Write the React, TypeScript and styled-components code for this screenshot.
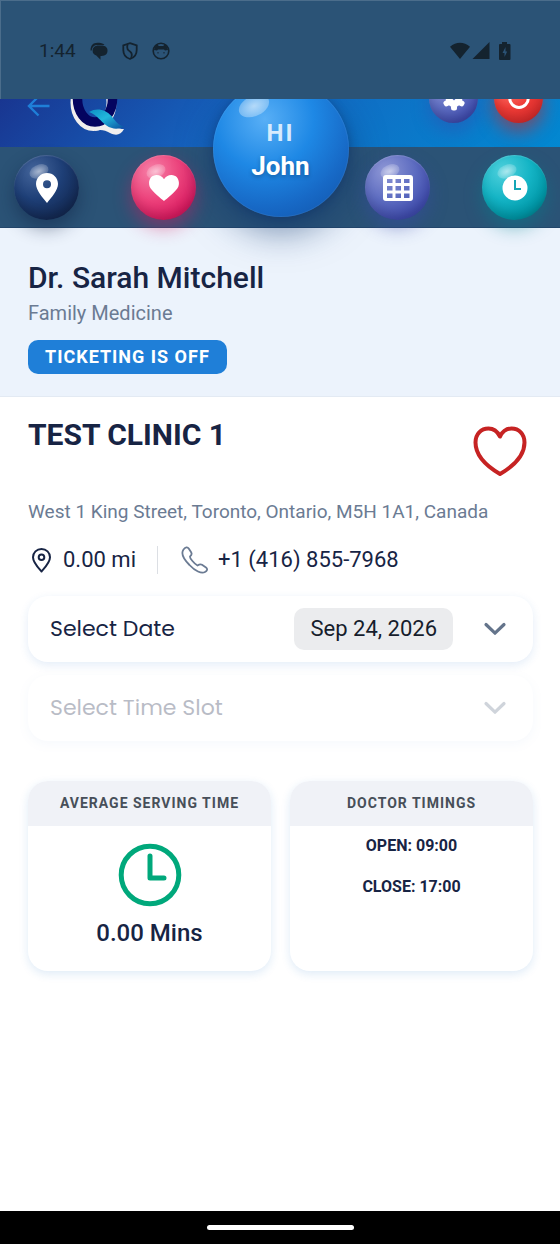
import React from 'react';
import styled, { createGlobalStyle } from 'styled-components';

const Global = createGlobalStyle`
  *, *::before, *::after { box-sizing: border-box; }
  body { margin: 0; background: #fff; font-family: Roboto, "Liberation Sans", sans-serif; color: #172444; }
  h1, h2, h3, p { margin: 0; }
  button { font: inherit; color: inherit; border: 0; padding: 0; background: none; cursor: pointer; }
  a { color: inherit; text-decoration: none; }
`;

const Page = styled.div`
  position: relative;
  display: flex;
  flex-direction: column;
  min-height: 100vh;
`;

const StatusBar = styled.div`
  position: absolute;
  inset: 0 0 auto;
  z-index: 4;
  display: flex;
  align-items: center;
  justify-content: space-between;
  height: 99px;
  padding: 2px 48px 0 39px;
  background: #2b5376;
  box-shadow: inset 1px 1px 0 #4b6d8b;
  color: #14232f;
  font-size: 19px;
  line-height: 24px;
`;

const StatusGroup = styled.div<{ $gap: number }>`
  display: flex;
  align-items: center;
  gap: ${(p) => p.$gap}px;
  svg { display: block; }
`;

const Header = styled.header`
  display: flex;
  align-items: flex-end;
  padding: 74px 17px 24px 26px;
  background: linear-gradient(135deg, #1a237e 0%, #1565c0 50%, #0288d1 100%);
`;

const BackButton = styled.button`
  display: flex;
  margin-bottom: 5px;
  color: #1f7fd8;
`;

const Logo = styled.a`
  display: flex;
  margin: 0 auto -12px 20px;
`;

const HeaderActions = styled.div`
  display: flex;
  gap: 16px;
`;

const tones = {
  navy: { fill: 'radial-gradient(circle at 32% 25%, #44659b 0%, #1e3f77 42%, #142b56 72%, #0e1d3d 100%)', glow: 'rgba(13, 30, 66, 0.45)' },
  pink: { fill: 'radial-gradient(circle at 32% 25%, #f67fa6 0%, #ec407a 45%, #d81b60 75%, #ad1457 100%)', glow: 'rgba(216, 27, 96, 0.45)' },
  indigo: { fill: 'radial-gradient(circle at 32% 25%, #8f98d6 0%, #5c6bc0 45%, #3f4bac 75%, #303f9f 100%)', glow: 'rgba(57, 73, 171, 0.45)' },
  teal: { fill: 'radial-gradient(circle at 32% 25%, #4ed0dc 0%, #14b4c5 42%, #0097a7 72%, #006a75 100%)', glow: 'rgba(0, 131, 143, 0.45)' },
  red: { fill: 'radial-gradient(circle at 32% 25%, #ff7b72 0%, #ee3b36 45%, #d82c2c 75%, #b01c1c 100%)', glow: 'rgba(198, 40, 40, 0.6)' },
};

const Orb = styled.button<{ $tone: keyof typeof tones; $small?: boolean }>`
  position: relative;
  display: flex;
  align-items: center;
  justify-content: center;
  flex: none;
  width: ${(p) => (p.$small ? 49 : 65)}px;
  height: ${(p) => (p.$small ? 49 : 65)}px;
  border-radius: 50%;
  color: #fff;
  background: ${(p) => tones[p.$tone].fill};
  box-shadow: 0 8px 18px ${(p) => tones[p.$tone].glow}, inset 0 -6px 10px rgba(0, 0, 0, 0.12), inset 0 1px 1px rgba(255, 255, 255, 0.15);

  &::before {
    content: '';
    position: absolute;
    top: 16%;
    left: 23%;
    width: 30%;
    height: 20%;
    border-radius: 50%;
    transform: rotate(-25deg);
    background: radial-gradient(closest-side, rgba(255, 255, 255, 0.55), rgba(255, 255, 255, 0.18));
  }

  svg { position: relative; display: block; }
`;

const NavBar = styled.nav`
  position: relative;
  z-index: 2;
  display: flex;
  justify-content: space-between;
  padding: 8px 13px 7px 14px;
  background: #2b5376;
  border-bottom: 1px solid #23466b;
`;

const CenterSlot = styled.div`
  position: relative;
  width: 65px;
  height: 65px;
`;

const ProfileOrb = styled.button`
  position: absolute;
  left: 50%;
  bottom: 3px;
  display: flex;
  flex-direction: column;
  align-items: center;
  width: 136px;
  height: 136px;
  margin-left: -68px;
  padding-top: 37px;
  border-radius: 50%;
  color: #fff;
  background: radial-gradient(circle at 38% 28%, #58aff6 0%, #1e88e5 38%, #1769c6 68%, #1050a4 100%);
  box-shadow: 0 14px 36px rgba(13, 52, 110, 0.55), 0 2px 10px rgba(13, 40, 90, 0.4), inset 0 0 0 1px rgba(255, 255, 255, 0.06);

  &::before {
    content: '';
    position: absolute;
    top: 15px;
    left: 25px;
    width: 32px;
    height: 20px;
    border-radius: 50%;
    transform: rotate(-25deg);
    background: radial-gradient(closest-side, rgba(255, 255, 255, 0.6), rgba(255, 255, 255, 0.3));
  }
`;

const Hello = styled.span`
  font-size: 24px;
  line-height: 30px;
  font-weight: 700;
  letter-spacing: 2px;
  color: #d6ebfd;
`;

const UserName = styled.span`
  font-size: 26px;
  line-height: 37px;
  font-weight: 700;
  text-shadow: 0 2px 4px rgba(0, 0, 0, 0.25);
`;

const DoctorPanel = styled.section`
  display: flex;
  flex-direction: column;
  align-items: flex-start;
  padding: 31px 28px 22px;
  background: #ecf3fc;
  border-bottom: 1px solid #e3eaf3;
`;

const DoctorName = styled.h1`
  font-size: 30px;
  line-height: 38px;
  font-weight: 500;
`;

const Specialty = styled.p`
  margin-top: 3px;
  font-size: 20px;
  line-height: 26px;
  color: #6b7b93;
`;

const TicketBadge = styled.span`
  margin-top: 14px;
  padding: 0 17px;
  border-radius: 10px;
  background: #1f7fd8;
  color: #fff;
  font-size: 18px;
  line-height: 34px;
  font-weight: 700;
  letter-spacing: 1px;
`;

const Content = styled.main`
  flex: 1;
  padding: 20px 27px 24px 28px;
`;

const ClinicHead = styled.div`
  display: flex;
  justify-content: space-between;
`;

const ClinicName = styled.h2`
  font-size: 30px;
  line-height: 36px;
  font-weight: 700;
`;

const FavoriteButton = styled.button`
  display: flex;
  margin: 8px 5px 0 0;
  color: #c62323;
`;

const Address = styled.p`
  margin-top: 22px;
  font-size: 19px;
  line-height: 26px;
  color: #6b7b93;
`;

const ContactRow = styled.div`
  display: flex;
  align-items: center;
  height: 28px;
  margin-top: 21px;
  font-size: 22px;
  line-height: 28px;
`;

const Distance = styled.span`
  display: flex;
  align-items: center;
  gap: 8px;
  padding-right: 21px;
  border-right: 1px solid #dcdfe4;
`;

const Phone = styled.a`
  display: flex;
  align-items: center;
  gap: 8px;
  margin-left: 22px;
`;

const PickerRow = styled.div<{ $disabled?: boolean }>`
  display: flex;
  align-items: center;
  height: 66px;
  margin-top: ${(p) => (p.$disabled ? 13 : 22)}px;
  padding: 0 26px 0 22px;
  border-radius: 20px;
  background: #fff;
  box-shadow: 0 3px 10px rgba(31, 110, 200, 0.12);
  opacity: ${(p) => (p.$disabled ? 0.3 : 1)};
`;

const PickerLabel = styled.span`
  flex: 1;
  font-family: Poppins, Inter, Roboto, sans-serif;
  font-size: 22px;
  line-height: 32px;
`;

const DateButton = styled.button`
  padding: 0 16px;
  margin-right: 30px;
  border-radius: 10px;
  background: #ebecee;
  color: #161d2c;
  font-size: 22px;
  line-height: 42px;
`;

const ChevronButton = styled.button`
  display: flex;
  color: #64748b;
`;

const CardGrid = styled.div`
  display: grid;
  grid-template-columns: 1fr 1fr;
  gap: 19px;
  margin-top: 40px;
`;

const Card = styled.section`
  min-height: 190px;
  border-radius: 20px;
  overflow: hidden;
  background: #fff;
  box-shadow: 0 3px 10px rgba(31, 110, 200, 0.14);
  text-align: center;
`;

const CardTitle = styled.h3`
  background: #f0f2f7;
  color: #474f59;
  font-size: 14px;
  line-height: 45px;
  font-weight: 700;
  letter-spacing: 1px;
`;

const CardBody = styled.div`
  display: flex;
  flex-direction: column;
  align-items: center;
`;

const ClockFace = styled.svg`
  display: block;
  margin-top: 17px;
`;

const ServingTime = styled.p`
  margin-top: 11px;
  font-size: 24px;
  line-height: 30px;
  font-weight: 500;
`;

const Timing = styled.p`
  padding-top: 9px;
  margin-bottom: 10px;
  font-size: 16px;
  line-height: 22px;
  font-weight: 700;
`;

const HomeBar = styled.div`
  display: flex;
  align-items: center;
  justify-content: center;
  height: 33px;
  background: #000;

  &::after {
    content: '';
    width: 147px;
    height: 5px;
    border-radius: 3px;
    background: #fff;
  }
`;

const Chevron = () => (
  <svg width="24" height="14" viewBox="0 0 24 14" fill="none" stroke="currentColor" strokeWidth="3.2" strokeLinecap="round" strokeLinejoin="round">
    <path d="M3 2.500 12 11.200 21 2.500" />
  </svg>
);

const Gear = () => (
  <svg width="26" height="26" viewBox="0 0 26 26" fill="currentColor">
    <circle cx="13" cy="13" r="4.800" fill="none" stroke="currentColor" strokeWidth="7" />
    {[0, 60, 120, 180, 240, 300].map((angle) => (
      <rect key={angle} x="10" y="1.500" width="6" height="6" rx="2.500" transform={`rotate(${angle} 13 13)`} />
    ))}
  </svg>
);

const QLogo = () => (
  <svg width="56" height="60" viewBox="0 0 56 60" aria-hidden="true">
    <defs>
      <linearGradient id="swoosh" x1="0" y1="0" x2="1" y2="1">
        <stop offset="0" stopColor="#0d8fc4" />
        <stop offset="0.45" stopColor="#22b7dc" />
        <stop offset="1" stopColor="#0a4fa0" />
      </linearGradient>
    </defs>
    <ellipse cx="23.500" cy="27.500" rx="18" ry="23.500" fill="none" stroke="#f1efee" strokeWidth="10" />
    <path d="M28 44 38 47C43 52 48 54 54 54 51 60 46 61 40 58 35 55.500 31 54 25 56Z" fill="#f1efee" />
    <ellipse cx="25" cy="24" rx="17.500" ry="23" fill="none" stroke="#04045f" strokeWidth="9.500" />
    <path d="M19 37C27 32 36 35 41.500 41 45.500 46.500 49 50.500 54 51.500 49 54.500 42 54.500 36.500 50.500 31 46.500 27 40 19 37Z" fill="url(#swoosh)" />
  </svg>
);

export default function App() {
  return (
    <Page>
      <Global />
      <StatusBar>
        <StatusGroup $gap={14}>
          <span>1:44</span>
          <svg width="18" height="18" viewBox="0 0 18 18" fill="currentColor">
            <path d="M.5 8.500C.5 3.500 3 .8 7.500 .8H9C11.500 .8 13.500 1.800 14.500 3H8C4 3 2 5 1.800 8.500Z" />
            <path d="M8.500 3.600H11.500C15.500 3.600 17.500 5.800 17.500 8.800S15.500 14 11.500 14H10.500V17.800L6.300 13.600C4 12.800 2.600 11.300 2.600 8.800 2.600 5.800 4.800 3.600 8.500 3.600Z" />
          </svg>
          <svg width="16" height="18" viewBox="0 0 16 18" fill="none" stroke="currentColor" strokeWidth="1.800">
            <path d="M8 1.200 14.700 3.300V8C14.700 12.500 12 15.800 8 17 4 15.800 1.300 12.500 1.300 8V3.300Z" />
            <path d="M5.500 2.500C4.500 7 6 8 8 9.500S10.500 13 9 16.500" />
          </svg>
          <svg width="18" height="18" viewBox="0 0 18 18">
            <circle cx="9" cy="9" r="7.800" fill="none" stroke="currentColor" strokeWidth="1.600" />
            <path d="M2 8 3.500 3.500 5 2.500 7 4H11L13 2.500 14.500 3.500 16 8 13 8.500 12 7.500H6L5 8.500Z" fill="currentColor" />
            <path d="M6 10V11.500M12 10V11.500" stroke="currentColor" strokeWidth="1" />
          </svg>
        </StatusGroup>
        <StatusGroup $gap={2}>
          <svg width="20" height="18" viewBox="0 0 20 18" fill="currentColor">
            <path d="M0 4.800C6-.6 14-.6 20 4.800L10 17Z" />
          </svg>
          <svg width="18" height="18" viewBox="0 0 18 18" fill="currentColor">
            <path d="M17.500 0V17H.5Z" />
          </svg>
          <svg width="20" height="20" viewBox="0 0 20 20">
            <path d="M10 1H15V3H17.500Q18.500 3 18.500 4V18Q18.500 19 17.500 19H8Q7 19 7 18V4Q7 3 8 3H10Z" fill="currentColor" />
            <path d="M13.500 6 10.500 12H12.500V16L15.200 10.500H13.500Z" fill="#2b5376" />
          </svg>
        </StatusGroup>
      </StatusBar>

      <Header>
        <BackButton aria-label="Back">
          <svg width="24" height="24" viewBox="0 0 24 24" fill="none" stroke="currentColor" strokeWidth="2.400">
            <path d="M23.500 12H4M12.500 2.500 3 12 12.500 21.500" />
          </svg>
        </BackButton>
        <Logo href="#home" aria-label="Home"><QLogo /></Logo>
        <HeaderActions>
          <Orb $tone="indigo" $small aria-label="Settings"><Gear /></Orb>
          <Orb $tone="red" $small aria-label="Log out">
            <svg width="24" height="24" viewBox="0 0 24 24" fill="none" stroke="currentColor" strokeWidth="3">
              <path d="M12 1V9M6 4A9.300 9.300 0 1 0 18 4" />
            </svg>
          </Orb>
        </HeaderActions>
      </Header>

      <NavBar>
        <Orb $tone="navy" aria-label="Locations">
          <svg width="24" height="32" viewBox="0 0 24 32" fill="currentColor" fillRule="evenodd">
            <path d="M12 1C18.100 1 23 5.800 23 12 23 18 16.500 25.500 12 31 7.500 25.500 1 18 1 12 1 5.800 5.900 1 12 1ZM12 8.200A4 4 0 1 0 12 16.200 4 4 0 1 0 12 8.200Z" />
          </svg>
        </Orb>
        <Orb $tone="pink" aria-label="Favorites">
          <svg width="32" height="28" viewBox="0 0 32 28" fill="currentColor">
            <path d="M16 27C14 25.500 3 16.500 1.600 12.500-.3 6.500 3 1 8.500 1 12 1 14.500 2.800 16 5.200 17.500 2.800 20 1 23.500 1 29 1 32.300 6.500 30.400 12.500 29 16.500 18 25.500 16 27Z" />
          </svg>
        </Orb>
        <CenterSlot>
          <ProfileOrb>
            <Hello>HI</Hello>
            <UserName>John</UserName>
          </ProfileOrb>
        </CenterSlot>
        <Orb $tone="indigo" aria-label="Calendar">
          <svg width="32" height="28" viewBox="0 0 32 28" fill="currentColor" fillRule="evenodd">
            <path d="M4 1H28Q31 1 31 4V24Q31 27 28 27H4Q1 27 1 24V4Q1 1 4 1ZM5 5V9H10.500V5ZM13.500 5V9H19V5ZM22 5V9H27.500V5ZM5 12V16.500H10.500V12ZM13.500 12V16.500H19V12ZM22 12V16.500H27.500V12ZM5 19.500V24H10.500V19.500ZM13.500 19.500V24H19V19.500ZM22 19.500V24H27.500V19.500Z" />
          </svg>
        </Orb>
        <Orb $tone="teal" aria-label="Appointments">
          <svg width="26" height="26" viewBox="0 0 26 26">
            <circle cx="13" cy="13" r="12.500" fill="currentColor" />
            <path d="M13 5V14H19" fill="none" stroke="#14a6b5" strokeWidth="2" />
          </svg>
        </Orb>
      </NavBar>

      <DoctorPanel>
        <DoctorName>Dr. Sarah Mitchell</DoctorName>
        <Specialty>Family Medicine</Specialty>
        <TicketBadge>TICKETING IS OFF</TicketBadge>
      </DoctorPanel>

      <Content>
        <ClinicHead>
          <ClinicName>TEST CLINIC 1</ClinicName>
          <FavoriteButton aria-label="Add to favorites">
            <svg width="56" height="52" viewBox="0 0 56 52" fill="none" stroke="currentColor" strokeWidth="4" strokeLinejoin="round">
              <path d="M28 11.500C25.500 6.500 21 3.500 16.500 3.500 9 3.500 3.500 9 3.500 17.500 3.500 31 16 42 28 49 40 42 52.500 31 52.500 17.500 52.500 9 47 3.500 39.500 3.500 35 3.500 30.500 6.500 28 11.500Z" />
            </svg>
          </FavoriteButton>
        </ClinicHead>
        <Address>West 1 King Street, Toronto, Ontario, M5H 1A1, Canada</Address>
        <ContactRow>
          <Distance>
            <svg width="27" height="26" viewBox="0 0 27 26" fill="none" stroke="currentColor" strokeWidth="2">
              <path d="M13.500 2C18.300 2 22 5.600 22 10.300 22 15.500 17 20.500 13.500 24.500 10 20.500 5 15.500 5 10.300 5 5.600 8.700 2 13.500 2Z" strokeLinejoin="round" />
              <circle cx="13.500" cy="10.300" r="2.800" />
            </svg>
            0.00 mi
          </Distance>
          <Phone href="tel:+14168557968">
            <svg width="30" height="28" viewBox="0 0 30 28" fill="none" stroke="#6b7b93" strokeWidth="1.800" strokeLinejoin="round">
              <path d="M3.500 3.500C5.500 1 7.500.6 8.700 2.500L11 6C12.300 8 11.500 9.300 10 10.500 9.500 12 14.500 18 17.500 19.500 19 18.500 20.500 17.800 22 18.800L26 21.500C28 23 27 25 25 26 21.500 28 15 25 9.500 19 3.500 13 1 7 3.500 3.500Z" />
            </svg>
            +1 (416) 855-7968
          </Phone>
        </ContactRow>

        <PickerRow>
          <PickerLabel>Select Date</PickerLabel>
          <DateButton>Sep 24, 2026</DateButton>
          <ChevronButton aria-label="Choose date"><Chevron /></ChevronButton>
        </PickerRow>
        <PickerRow $disabled>
          <PickerLabel>Select Time Slot</PickerLabel>
          <ChevronButton disabled aria-label="Choose time slot"><Chevron /></ChevronButton>
        </PickerRow>

        <CardGrid>
          <Card>
            <CardTitle>AVERAGE SERVING TIME</CardTitle>
            <CardBody>
              <ClockFace width="64" height="64" viewBox="0 0 64 64" fill="none" stroke="#00a87b" strokeWidth="5">
                <circle cx="32" cy="32" r="28.800" />
                <path d="M32 13V35H46" strokeLinecap="round" strokeLinejoin="round" />
              </ClockFace>
              <ServingTime>0.00 Mins</ServingTime>
            </CardBody>
          </Card>
          <Card>
            <CardTitle>DOCTOR TIMINGS</CardTitle>
            <CardBody>
              <Timing>OPEN: 09:00</Timing>
              <Timing>CLOSE: 17:00</Timing>
            </CardBody>
          </Card>
        </CardGrid>
      </Content>
      <HomeBar />
    </Page>
  );
}
